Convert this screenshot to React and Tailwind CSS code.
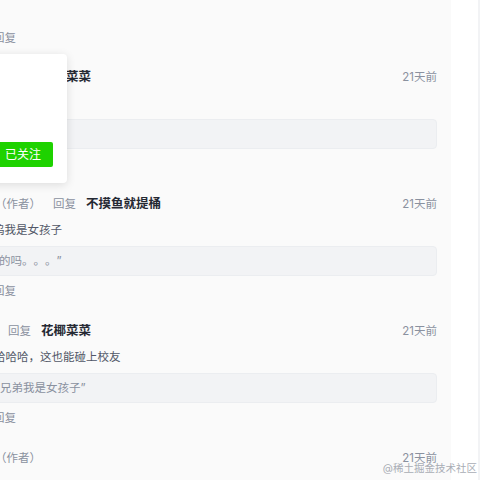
import React from 'react';

const comments = [
  {
    author: false,
    name: '花椰菜菜',
    text: '是的',
    textOffset: -7,
    quote: '“哈哈”',
    quotePad: 20,
  },
  {
    author: true,
    name: '不摸鱼就提桶',
    text: '呜我是女孩子',
    textOffset: -7,
    quote: '的吗。。。”',
    quotePad: 19,
  },
  {
    author: false,
    name: '花椰菜菜',
    text: '哈哈哈，这也能碰上校友',
    textOffset: -6,
    quote: '兄弟我是女孩子”',
    quotePad: 20,
  },
];

function ReplyItem({ c }) {
  return (
    <div className="mb-[18px]">
      <div className="flex items-center h-[22px] leading-[22px] text-[11.5px] text-[#8a919f] whitespace-nowrap">
        {c.author ? (
          <>
            <span className="ml-[-5px]">（作者）</span>
            <span className="ml-[12px]">回复</span>
          </>
        ) : (
          <span className="ml-[8px]">回复</span>
        )}
        <span className="ml-[10px] text-[12.5px] font-semibold text-[#252933]">{c.name}</span>
        <span className="ml-auto">21天前</span>
      </div>
      <div
        className="mt-[4px] h-[22px] leading-[22px] text-[11.5px] text-[#515767] whitespace-nowrap"
        style={{ marginLeft: c.textOffset }}
      >
        {c.text}
      </div>
      <div
        className="mt-[5px] ml-[-20px] h-[30px] leading-[28px] rounded-[4px] border border-[#ebedf0] bg-[#f2f3f5] text-[11.5px] text-[#8a919f] whitespace-nowrap overflow-hidden"
        style={{ paddingLeft: c.quotePad - 1 }}
      >
        {c.quote}
      </div>
      <div className="mt-[4px] ml-[-7px] h-[22px] leading-[22px] text-[11.5px] text-[#8a919f]">回复</div>
    </div>
  );
}

export default function App() {
  return (
    <div className="w-[480px] h-[480px] flex overflow-hidden bg-white font-[Inter,'Noto_Sans_CJK_SC',sans-serif] [text-spacing-trim:space-all]">
      <div className="w-[451px] h-full bg-[#fafafa] relative overflow-hidden">
        <div className="pt-[27px] pr-[14px]">
          <div className="mb-[17px] ml-[-7px] h-[22px] leading-[22px] text-[11.5px] text-[#8a919f]">回复</div>
          {comments.map((c, i) => (
            <ReplyItem key={i} c={c} />
          ))}
          <div className="flex items-center h-[22px] leading-[22px] text-[11.5px] text-[#8a919f] whitespace-nowrap">
            <span className="ml-[-5px]">（作者）</span>
            <span className="ml-auto">21天前</span>
          </div>
          <div className="mt-[6px] ml-[-7px] h-[22px] leading-[22px] text-[11.5px] text-[#515767] whitespace-nowrap">
            好巧啊，我也是这个学校的
          </div>
        </div>

        {/* hover card */}
        <div className="absolute left-[-213px] top-[54px] w-[280px] h-[129px] bg-white rounded-[4px] shadow-[0_2px_10px_rgba(0,0,0,0.12)] flex items-end justify-end pr-[14px] pb-[16px]">
          <button className="w-[60px] h-[25px] rounded-[2px] bg-[#1ed200] text-white text-[12px] leading-[25px]">
            已关注
          </button>
        </div>
      </div>
      <div className="w-[27px] h-full bg-white" />
      <div className="flex-1 h-full bg-[#f2f3f5]" />

      <div className="absolute right-[3px] top-[463px] text-[10.5px] leading-[12px] text-[#a9adb5] whitespace-nowrap">
        @稀土掘金技术社区
      </div>
    </div>
  );
}
